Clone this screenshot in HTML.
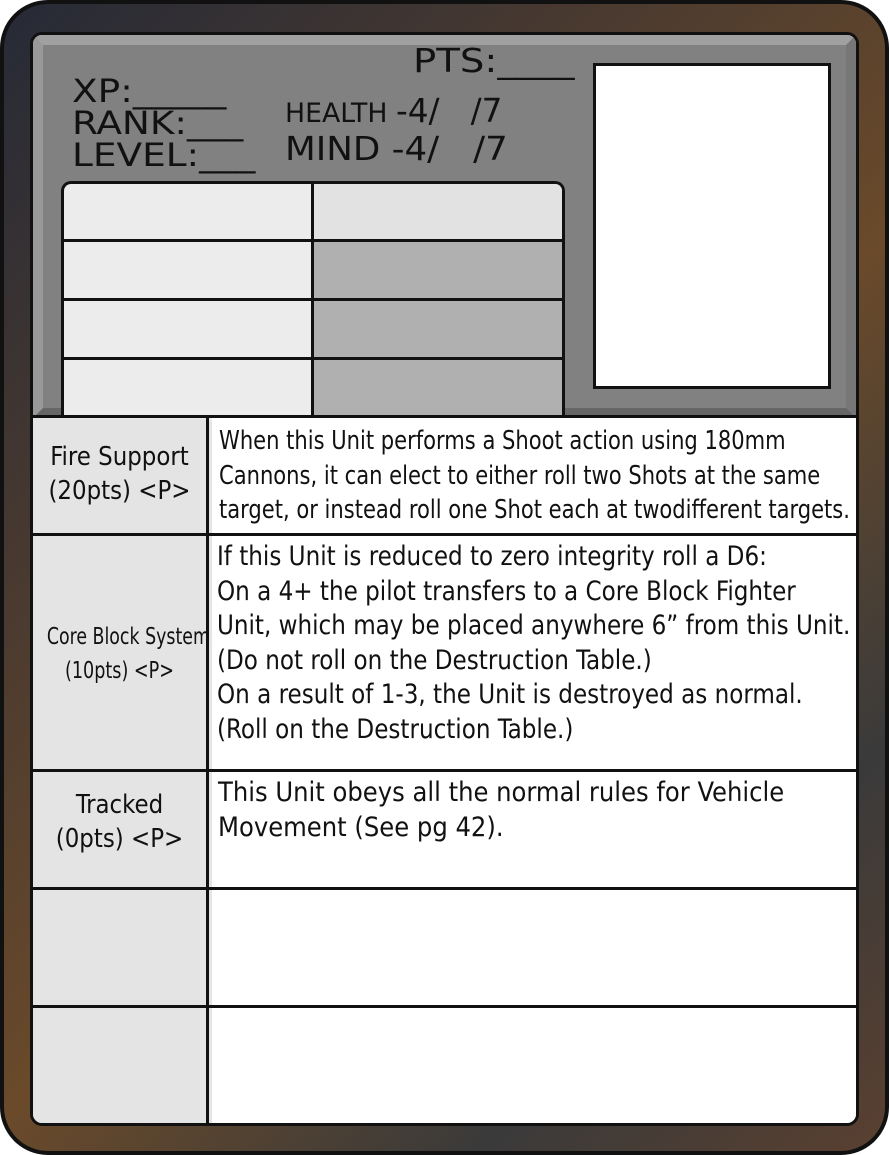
<!DOCTYPE html>
<html><head><meta charset="utf-8"><style>
*{margin:0;padding:0;box-sizing:border-box}
body{width:889px;height:1155px;background:#fff;position:relative;overflow:hidden;font-family:"DejaVu Sans Condensed","DejaVu Sans",sans-serif;color:#111}
.card{position:absolute;left:0;top:0;width:889px;height:1155px;border-radius:48px;background:linear-gradient(135deg,#262a36 0%,#4a3a30 30%,#6a4a2a 55%,#3a3a3a 80%,#5a4030 100%);border:4px solid #111}
.inner{position:absolute;left:30px;top:32px;width:829px;height:1094px;border:3px solid #111;border-radius:12px;background:#e4e4e4;overflow:hidden}
.top{position:absolute;left:0;top:0;width:100%;height:383px;background:#818181;border:10px solid #9a9a9a;border-color:#a0a0a0 #777 #666 #999}
.t{position:absolute;white-space:nowrap;transform-origin:0 0;color:#111}
.photo{position:absolute;left:560px;top:28px;width:238px;height:326px;background:#fff;border:3px solid #111}
.stats{position:absolute;left:28px;top:146px;width:504px;height:240px;border:3px solid #111;border-bottom:none;border-radius:10px 10px 0 0;overflow:hidden;background:#ececec}
.hl{position:absolute;left:0;width:100%;height:3px;background:#111}
.rows{position:absolute;left:0;top:380px;width:100%}
.row{position:absolute;left:0;width:100%;border-top:3px solid #111}
.lc{position:absolute;left:0;top:0;width:176px;height:100%;background:#e4e4e4;border-right:3px solid #111;text-align:center}
.rc{position:absolute;left:179px;top:0;right:0;height:100%;background:#fff}
.ln{display:block;white-space:nowrap;transform-origin:0 0;transform:scaleX(.9);font-size:26px;line-height:34.5px}
.r2 .ln{font-size:27px;transform:scaleX(.95)}
.r3 .ln{font-size:27px;transform:scaleX(1.0)}
.lt{display:block;white-space:nowrap;font-size:26px;line-height:34px;transform:scaleX(.98)}
</style></head><body>
<div class="card"></div>
<div class="inner">
 <div class="top"></div>
 <div class="t" style="left:380px;top:6px;font-size:33px;transform:scaleX(1.3)">PTS:____</div>
 <div class="t" style="left:39px;top:40px;font-size:32px;line-height:32px;transform:scaleX(1.3)">XP:_____<br>RANK:___<br>LEVEL:___</div>
 <div class="t" style="left:252px;top:56px;font-size:27px;transform:scaleX(1.1)">HEALTH <span style="font-size:33px">-4/&nbsp;&nbsp;&nbsp;/7</span></div>
 <div class="t" style="left:252px;top:94px;font-size:33px;transform:scaleX(1.2)">MIND -4/&nbsp;&nbsp;&nbsp;/7</div>
 <div class="photo"></div>
 <div class="stats">
  <div style="position:absolute;left:248px;top:0;width:256px;height:100%;background:#b0b0b0"></div>
  <div style="position:absolute;left:248px;top:0;width:256px;height:55px;background:#e2e2e2"></div>
  <div style="position:absolute;left:247px;top:0;width:3px;height:100%;background:#111"></div>
  <div class="hl" style="top:55px"></div><div class="hl" style="top:114px"></div><div class="hl" style="top:173px"></div>
 </div>
 <div class="rows">
  <div class="row" style="top:0;height:118px"><div class="lc" style="padding-top:22px"><span class="lt">Fire Support</span><span class="lt">(20pts) &lt;P&gt;</span></div>
   <div class="rc" style="padding:6px 0 0 7px"><span class="ln">When this Unit performs a Shoot action using 180mm</span><span class="ln">Cannons, it can elect to either roll two Shots at the same</span><span class="ln">target, or instead roll one Shot each at twodifferent targets.</span></div></div>
  <div class="row r2" style="top:118px;height:236px"><div class="lc" style="padding-top:84px"><span class="lt" style="font-size:23px;transform:scaleX(.84)">Core Block System</span><span class="lt" style="font-size:23px;transform:scaleX(.85)">(10pts) &lt;P&gt;</span></div>
   <div class="rc" style="padding:4px 0 0 5px"><span class="ln">If this Unit is reduced to zero integrity roll a D6:</span><span class="ln">On a 4+ the pilot transfers to a Core Block Fighter</span><span class="ln">Unit, which may be placed anywhere 6” from this Unit.</span><span class="ln">(Do not roll on the Destruction Table.)</span><span class="ln">On a result of 1-3, the Unit is destroyed as normal.</span><span class="ln">(Roll on the Destruction Table.)</span></div></div>
  <div class="row r3" style="top:354px;height:118px"><div class="lc" style="padding-top:16px"><span class="lt">Tracked</span><span class="lt">(0pts) &lt;P&gt;</span></div>
   <div class="rc" style="padding:4px 0 0 6px"><span class="ln">This Unit obeys all the normal rules for Vehicle</span><span class="ln">Movement (See pg 42).</span></div></div>
  <div class="row" style="top:472px;height:118px"><div class="lc"></div><div class="rc"></div></div>
  <div class="row" style="top:590px;height:130px"><div class="lc"></div><div class="rc"></div></div>
 </div>
</div>
</body></html>
